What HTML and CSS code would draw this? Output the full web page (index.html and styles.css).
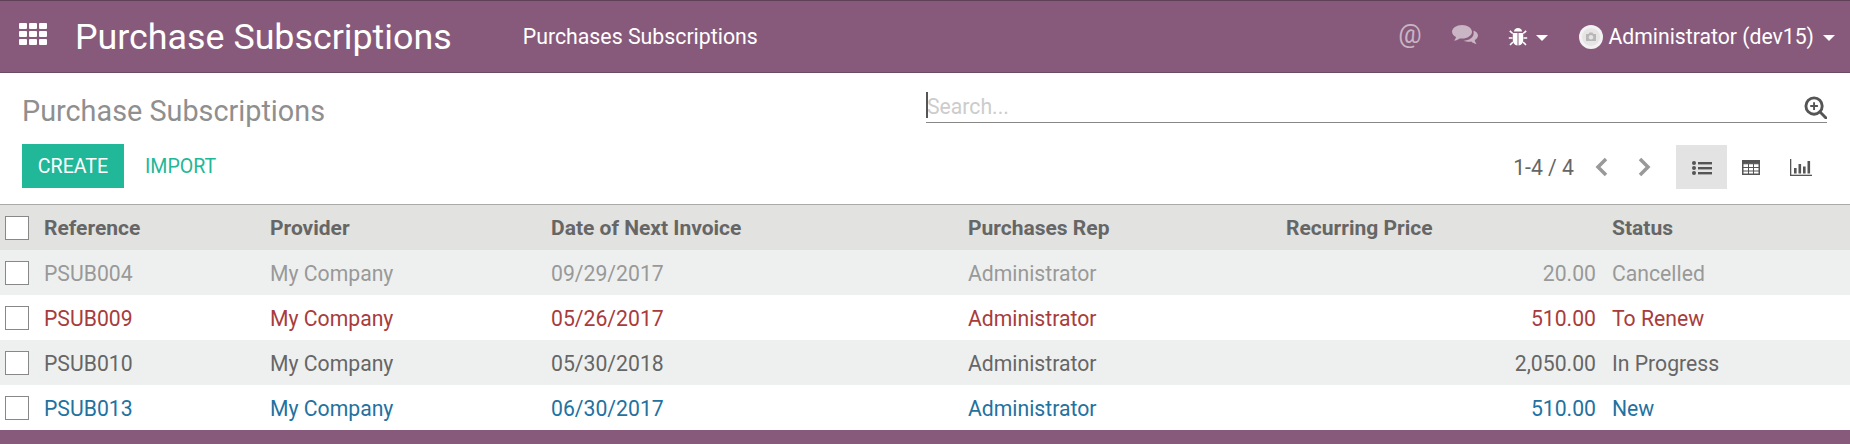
FILE: index.html
```html
<!DOCTYPE html>
<html lang="en">

    <head>
        <meta charset="UTF-8">
        <meta name="viewport" content="width=device-width, initial-scale=1.0">
        <title>Purchase Subscriptions</title>
        <link rel="stylesheet" href="styles.css">
    </head>

    <body>
        <header class="navbar">
            <svg class="apps-icon" viewBox="0 0 28 22" fill="#fff">
                <rect x="0" y="0" width="8" height="6" rx="1"/><rect x="10" y="0" width="8" height="6" rx="1"/><rect x="20" y="0" width="8" height="6" rx="1"/>
                <rect x="0" y="8" width="8" height="6" rx="1"/><rect x="10" y="8" width="8" height="6" rx="1"/><rect x="20" y="8" width="8" height="6" rx="1"/>
                <rect x="0" y="16" width="8" height="6" rx="1"/><rect x="10" y="16" width="8" height="6" rx="1"/><rect x="20" y="16" width="8" height="6" rx="1"/>
            </svg>
            <span class="brand">Purchase Subscriptions</span>
            <span class="menu-item">Purchases Subscriptions</span>

            <div class="systray">
                <span class="at-icon">@</span>
                <svg class="chat-icon" viewBox="0 0 26 20" fill="#c9b5c4">
                    <path d="M10 0c5.500 0 10 3 10 6.800s-4.500 6.800-10 6.800c-.8 0-1.500 0-2.200-.2-1.700 1.300-3.600 2-5.800 2.200 1-1 1.800-2.200 2-3.600C1.600 10.800 0 9 0 6.800 0 3 4.500 0 10 0z"/>
                    <path d="M21.500 5.500c2.700 1 4.500 2.900 4.500 5 0 1.900-1.300 3.500-3.300 4.500.2 1.400.8 2.800 1.800 4-2-.3-3.900-1.200-5.300-2.500-.9.200-1.700.3-2.700.3-1.800 0-3.500-.4-4.900-1 5.500-.2 10-3.400 10-7.300 0-1-.1-2-.1-3z"/>
                </svg>
                <svg class="bug-icon" viewBox="0 0 20 20" fill="#fff">
                    <path d="M6 4.500C6 2.300 7.800 1 10 1s4 1.300 4 3.500z"/>
                    <path d="M4.800 6h4.700v12.500C6.500 18.300 4.800 16 4.800 13zM10.500 6h4.700v7c0 3-1.700 5.300-4.700 5.500z"/>
                    <path d="M4.700 6.500 1.800 3.800M15.300 6.500l2.900-2.700M4.500 11H.8M15.500 11h3.700M5 15l-3 3M15 15l3 3" stroke="#fff" stroke-width="1.600" fill="none"/>
                </svg>
                <span class="caret caret-bug"></span>
                <svg class="avatar" viewBox="0 0 24 24">
                    <circle cx="12" cy="12" r="12" fill="#f3f1f2"/>
                    <circle cx="12" cy="12" r="9" fill="#e6e4e5"/>
                    <path d="M7 9h2.500l1-1.500h3l1 1.500H17v7H7z" fill="#b9b6b8"/>
                    <circle cx="12" cy="12.200" r="2.200" fill="#e6e4e5"/>
                </svg>
                <span class="user-name">Administrator (dev15)</span>
                <span class="caret"></span>
            </div>
        </header>

        <section class="control-panel">
            <div class="cp-left">
                <h1 class="page-title">Purchase Subscriptions</h1>
                <div class="cp-buttons">
                    <button class="btn-create">CREATE</button>
                    <button class="btn-import">IMPORT</button>
                </div>
            </div>
            <div class="cp-right">
                <div class="search-bar">
                    <span class="search-cursor"></span>
                    <span class="search-placeholder">Search...</span>
                    <svg class="search-icon" viewBox="0 0 24 24" fill="none" stroke="#555" stroke-width="3">
                        <circle cx="10.500" cy="10.500" r="8.500"/>
                        <path d="M16.500 16.500 23 23" stroke-linecap="round"/>
                        <path d="M10.500 6.500v8M6.500 10.500h8" stroke-width="2"/>
                    </svg>
                </div>
                <div class="cp-tools">
                    <span class="pager-value">1-4 / 4</span>
                    <svg class="pager-arrow" viewBox="0 0 13 20" fill="none" stroke="#999" stroke-width="3.500"><path d="M11 2 3 10l8 8"/></svg>
                    <svg class="pager-arrow" viewBox="0 0 13 20" fill="none" stroke="#999" stroke-width="3.500"><path d="M2 2l8 8-8 8"/></svg>
                    <div class="view-switch">
                        <button class="view-btn active">
                            <svg class="view-icon-list" viewBox="0 0 20 14" fill="#555">
                                <circle cx="2" cy="2" r="2"/><circle cx="2" cy="7" r="2"/><circle cx="2" cy="12" r="2"/>
                                <rect x="6" y="1" width="14" height="2.400"/><rect x="6" y="6" width="14" height="2.400"/><rect x="6" y="11" width="14" height="2.400"/>
                            </svg>
                        </button>
                        <button class="view-btn view-btn-table">
                            <svg class="view-icon-table" viewBox="0 0 18 15" fill="none" stroke="#555">
                                <rect x="0.750" y="0.750" width="16.500" height="13.500" stroke-width="1.500"/>
                                <rect x="0.750" y="0.750" width="16.500" height="3" fill="#555" stroke-width="1"/>
                                <path d="M6.500 4v10M11.500 4v10M1 7.500h16M1 11h16" stroke-width="1"/>
                            </svg>
                        </button>
                        <button class="view-btn view-btn-graph">
                            <svg class="view-icon-graph" viewBox="0 0 22 17" fill="#555">
                                <rect x="0" y="0" width="1.300" height="17"/><rect x="0" y="15.700" width="22" height="1.300"/>
                                <rect x="4" y="9" width="2.600" height="5.500"/><rect x="8.500" y="5" width="2.600" height="9.500"/><rect x="13" y="7.500" width="2.600" height="7"/><rect x="17.500" y="2" width="2.600" height="12.500"/>
                            </svg>
                        </button>
                    </div>
                </div>
            </div>
        </section>

        <table class="list-table">
            <colgroup>
                <col class="col-check">
                <col class="col-ref">
                <col class="col-provider">
                <col class="col-date">
                <col class="col-rep">
                <col class="col-price">
                <col>
            </colgroup>
            <thead>
                <tr>
                    <th><span class="checkbox"></span></th>
                    <th>Reference</th>
                    <th>Provider</th>
                    <th>Date of Next Invoice</th>
                    <th>Purchases Rep</th>
                    <th>Recurring Price</th>
                    <th>Status</th>
                </tr>
            </thead>
            <tbody>
                <tr class="row-muted">
                    <td><span class="checkbox"></span></td>
                    <td>PSUB004</td>
                    <td>My Company</td>
                    <td>09/29/2017</td>
                    <td>Administrator</td>
                    <td class="num">20.00</td>
                    <td>Cancelled</td>
                </tr>
                <tr class="row-danger">
                    <td><span class="checkbox"></span></td>
                    <td>PSUB009</td>
                    <td>My Company</td>
                    <td>05/26/2017</td>
                    <td>Administrator</td>
                    <td class="num">510.00</td>
                    <td>To Renew</td>
                </tr>
                <tr>
                    <td><span class="checkbox"></span></td>
                    <td>PSUB010</td>
                    <td>My Company</td>
                    <td>05/30/2018</td>
                    <td>Administrator</td>
                    <td class="num">2,050.00</td>
                    <td>In Progress</td>
                </tr>
                <tr class="row-info">
                    <td><span class="checkbox"></span></td>
                    <td>PSUB013</td>
                    <td>My Company</td>
                    <td>06/30/2017</td>
                    <td>Administrator</td>
                    <td class="num">510.00</td>
                    <td>New</td>
                </tr>
            </tbody>
        </table>

        <footer class="page-footer"></footer>
    </body>

</html>
```

FILE: styles.css
```css
body {
    font-family: Roboto, Arial, sans-serif;
    font-size: 21.2px;
    color: #666;
    background-color: #fff;
    margin: 0;
    height: 444px;
    overflow: hidden;
    display: flex;
    flex-direction: column;
}

.navbar {
    background: #875a7b;
    border-top: 1px solid #5f4057;
    border-bottom: 1px solid #6b4a63;
    height: 71px;
    flex: none;
    display: flex;
    align-items: center;
    color: #fff;
    padding: 0 15px 0 19px;
}

.apps-icon {
    width: 28px;
    height: 22px;
    margin-bottom: 5px;
}

.brand {
    font-size: 35.800px;
    margin-left: 28px;
}

.menu-item {
    font-size: 21.300px;
    margin-left: 71px;
}

.systray {
    margin-left: auto;
    display: flex;
    align-items: center;
}

.at-icon {
    color: #c9b5c4;
    font-size: 26px;
    margin-bottom: 5px;
}

.chat-icon {
    width: 26px;
    height: 20px;
    margin-left: 31px;
    margin-bottom: 3px;
}

.bug-icon {
    width: 20px;
    height: 20px;
    margin-left: 30px;
}

.caret {
    width: 0;
    height: 0;
    border-top: 6px solid #fff;
    border-left: 6px solid transparent;
    border-right: 6px solid transparent;
    margin-left: 9px;
    margin-top: 2px;
}

.caret-bug {
    margin-left: 8px;
}

.avatar {
    width: 24px;
    height: 24px;
    margin-left: 31px;
}

.user-name {
    margin-left: 5px;
}

.control-panel {
    flex: none;
    height: 132px;
    box-sizing: border-box;
    border-bottom: 1px solid #aaa;
    display: flex;
    justify-content: space-between;
    padding: 0 23px 0 22px;
}

.page-title {
    font-size: 28.800px;
    font-weight: 400;
    color: #8f8f8f;
    margin: 18px 0 0 0;
    line-height: 40px;
}

.cp-buttons {
    display: flex;
    align-items: center;
    margin-top: 13px;
}

button {
    font-family: inherit;
    border: none;
    background: none;
    padding: 1px 0 0;
}

.btn-create {
    background: #21b799;
    color: #fff;
    width: 102px;
    height: 44px;
    font-size: 19.600px;
}

.btn-import {
    color: #21b799;
    font-size: 19.600px;
    margin-left: 21px;
}

.cp-right {
    width: 901px;
}

.search-bar {
    display: flex;
    align-items: flex-end;
    height: 49px;
    border-bottom: 1px solid #888;
    position: relative;
}

.search-cursor {
    position: absolute;
    left: 0;
    top: 19px;
    width: 2px;
    height: 26px;
    background: #555;
}

.search-placeholder {
    color: #ccc;
    font-size: 21.200px;
    padding-bottom: 3px;
    margin-left: 1px;
}

.search-icon {
    width: 23px;
    height: 23px;
    margin-left: auto;
    margin-bottom: 3px;
}

.cp-tools {
    display: flex;
    align-items: center;
    justify-content: flex-end;
    margin-top: 22px;
    height: 44px;
}

.pager-arrow {
    width: 13px;
    height: 20px;
    margin-left: 21px;
}

.pager-arrow + .pager-arrow {
    margin-left: 30px;
}

.view-switch {
    display: flex;
    margin-left: 25px;
}

.view-btn {
    width: 51px;
    height: 44px;
    display: flex;
    align-items: center;
    justify-content: center;
}

.view-btn-table {
    width: 47px;
}

.view-btn-graph {
    width: 53px;
}

.view-btn.active {
    background: #e3e3e3;
}

.view-icon-list {
    width: 20px;
    height: 14px;
}

.view-icon-table {
    width: 18px;
    height: 15px;
}

.view-icon-graph {
    width: 22px;
    height: 17px;
}

.list-table {
    width: 100%;
    flex: none;
    table-layout: fixed;
    border-collapse: collapse;
}

.col-check { width: 36px; }
.col-ref { width: 226px; }
.col-provider { width: 281px; }
.col-date { width: 417px; }
.col-rep { width: 318px; }
.col-price { width: 326px; }

.list-table th,
.list-table td {
    height: 45px;
    padding: 1px 8px 0;
    text-align: left;
    box-sizing: border-box;
    vertical-align: middle;
}

.list-table th {
    background: #e2e2e0;
    font-size: 21px;
    font-weight: 700;
}

.list-table th:first-child,
.list-table td:first-child {
    padding: 0 0 0 5px;
}

.list-table tbody tr:nth-child(odd) {
    background: #eef0ef;
}

.list-table td.num {
    text-align: right;
}

.checkbox {
    display: block;
    width: 24px;
    height: 24px;
    box-sizing: border-box;
    background: #fff;
    border: 1px solid #888;
}

.row-muted td { color: #999; }
.row-danger td { color: #a83c3c; }
.row-info td { color: #23719f; }

.page-footer {
    flex: 1;
    background: #875a7b;
}
```
